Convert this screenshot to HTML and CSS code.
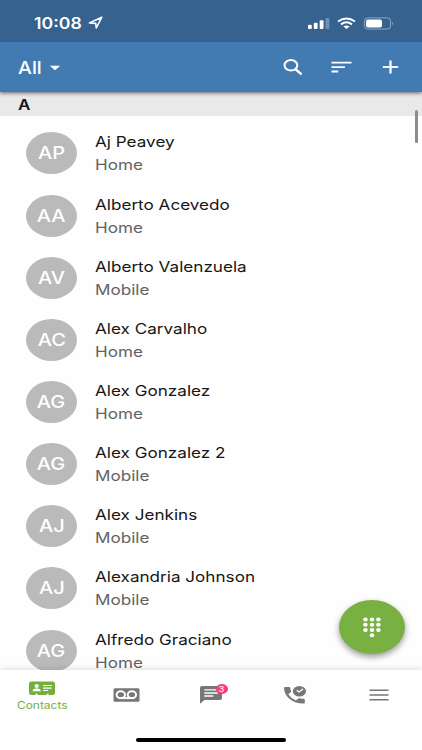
FILE: index.html
```html
<!DOCTYPE html>
<html lang="en">
<head>
<meta charset="utf-8">
<title>Contacts</title>
<link rel="stylesheet" href="styles.css">
</head>
<body>
<div class="app">
  <header class="status">
    <div class="clock"><span class="wide">10:08</span></div>
    <svg class="locate" width="16" height="14" viewBox="0 0 16 14"><path d="M1.4 6.9 13.8 1.2 8.3 12 7.7 7.4Z" fill="none" stroke="#fff" stroke-width="1.6" stroke-linejoin="round"/></svg>
    <svg class="signals" width="88" height="14" viewBox="0 0 88 14">
      <g fill="#fff"><rect x="1" y="7.7" width="3.8" height="4.3" rx="1"/><rect x="6.8" y="5.7" width="3.8" height="6.3" rx="1"/><rect x="12.7" y="3.2" width="3.8" height="8.8" rx="1"/><rect x="18.5" y="1" width="3.8" height="11" rx="1" opacity=".3"/></g>
      <g fill="none" stroke="#fff" stroke-width="2"><path d="M31 4.5Q39.5-1.5 48 4.5"/><path d="M34 7.4Q39.5 3.3 45 7.4"/></g>
      <path d="M36.4 9.6Q39.5 7.3 42.6 9.6L39.5 12Z" fill="#fff"/>
      <rect x="57.4" y=".9" width="26.2" height="11.2" rx="3.4" fill="none" stroke="#fff" stroke-opacity=".45"/>
      <rect x="59" y="2.6" width="16" height="7.8" rx="2" fill="#fff"/>
      <path d="M85 4.6Q86.8 6.5 85 8.4Z" fill="#fff" opacity=".5"/>
    </svg>
  </header>
  <nav class="toolbar">
    <div class="filter"><span class="wide">All</span></div>
    <svg class="caret" width="12" height="6" viewBox="0 0 12 6"><path d="M.8.8H11.2L6 5.2Z" fill="#fff"/></svg>
    <svg class="search" width="20" height="17" viewBox="0 0 20 17"><g fill="none" stroke="#fff" stroke-width="2"><ellipse cx="7.9" cy="6.3" rx="6.4" ry="5.2"/><path d="M12.2 10 18.6 15.4" stroke-width="2.4"/></g></svg>
    <svg class="sort" width="21" height="12" viewBox="0 0 21 12"><path d="M.5 1.6h20M.5 6.1h13.4M.5 10.5h6.7" stroke="#fff" stroke-width="1.9"/></svg>
    <svg class="plus" width="17" height="14" viewBox="0 0 17 14"><path d="M.8 7h15.4" stroke="#fff" stroke-width="1.9"/><path d="M8.5.5v13" stroke="#fff" stroke-width="2.2"/></svg>
  </nav>
  <main class="content">
    <h2 class="letter"><span class="wide">A</span></h2>
    <ul class="list">
      <li><div class="avatar"><span class="wide">AP</span></div><div class="info"><b class="wide">Aj Peavey</b><small class="wide">Home</small></div></li>
      <li><div class="avatar"><span class="wide">AA</span></div><div class="info"><b class="wide">Alberto Acevedo</b><small class="wide">Home</small></div></li>
      <li><div class="avatar"><span class="wide">AV</span></div><div class="info"><b class="wide">Alberto Valenzuela</b><small class="wide">Mobile</small></div></li>
      <li><div class="avatar"><span class="wide">AC</span></div><div class="info"><b class="wide">Alex Carvalho</b><small class="wide">Home</small></div></li>
      <li><div class="avatar"><span class="wide">AG</span></div><div class="info"><b class="wide">Alex Gonzalez</b><small class="wide">Home</small></div></li>
      <li><div class="avatar"><span class="wide">AG</span></div><div class="info"><b class="wide">Alex Gonzalez 2</b><small class="wide">Mobile</small></div></li>
      <li><div class="avatar"><span class="wide">AJ</span></div><div class="info"><b class="wide">Alex Jenkins</b><small class="wide">Mobile</small></div></li>
      <li><div class="avatar"><span class="wide">AJ</span></div><div class="info"><b class="wide">Alexandria Johnson</b><small class="wide">Mobile</small></div></li>
      <li><div class="avatar"><span class="wide">AG</span></div><div class="info"><b class="wide">Alfredo Graciano</b><small class="wide">Home</small></div></li>
    </ul>
    <div class="scrollbar"></div>
    <div class="fab">
      <svg width="20" height="21" viewBox="0 0 20 21"><g fill="#fff"><ellipse cx="3.4" cy="2.4" rx="2.3" ry="2"/><ellipse cx="10" cy="2.4" rx="2.3" ry="2"/><ellipse cx="16.4" cy="2.4" rx="2.3" ry="2"/><ellipse cx="3.4" cy="7.7" rx="2.3" ry="2"/><ellipse cx="10" cy="7.7" rx="2.3" ry="2"/><ellipse cx="16.4" cy="7.7" rx="2.3" ry="2"/><ellipse cx="3.4" cy="13" rx="2.3" ry="2"/><ellipse cx="10" cy="13" rx="2.3" ry="2"/><ellipse cx="16.4" cy="13" rx="2.3" ry="2"/><ellipse cx="10" cy="18.3" rx="2.3" ry="2"/></g></svg>
    </div>
  </main>
  <footer class="tabs">
    <div class="tab active">
      <svg width="28" height="15" viewBox="0 0 28 15"><path d="M3.5.6h21Q27 .6 27 2.8v9Q27 14 24.5 14h-3.8v-1.2h-2V14H9.5v-1.2h-2V14h-4Q1 14 1 11.8v-9Q1 .6 3.5.6Z" fill="#75ae3c"/><g fill="#fff"><ellipse cx="8.7" cy="5" rx="2.2" ry="2"/><path d="M4.5 10.3Q4.7 7.6 7.3 7.4h2.8q2.6.2 2.8 2.900Z"/></g><path d="M15 4.500h8.800M15 7.100h8.800M15 9.500h5.200" stroke="#fff" stroke-width="1.100"/></svg>
      <span class="wide">Contacts</span>
    </div>
    <div class="tab">
      <svg width="27" height="14" viewBox="0 0 27 14"><rect x=".5" y=".2" width="26" height="13.600" rx="1.500" fill="#777"/><g fill="none" stroke="#fff" stroke-width="2"><ellipse cx="7.800" cy="6.700" rx="4.200" ry="3.400"/><ellipse cx="18.900" cy="6.700" rx="4.200" ry="3.400"/><path d="M7.800 10.100h11.100"/></g></svg>
    </div>
    <div class="tab chat">
      <svg width="22" height="18" viewBox="0 0 22 18"><path d="M2 0h18q2 0 2 1.700v10.600q0 1.700-2 1.700H4.500L0 17.800V1.700Q0 0 2 0Z" fill="#777"/><path d="M4.300 3.900h13.400M4.300 7h13.400M4.300 10h9" stroke="#fff" stroke-width="1.400"/></svg>
      <i class="badge"><span class="wide">3</span></i>
    </div>
    <div class="tab">
      <svg width="22" height="18" viewBox="0 0 22 18"><path d="M1.100 1h4.100q1.100 0 1.100 1 .1 1.700.7 3.200.2.600-.3 1.100L4.300 8.200q2.600 4.200 7.700 6.300l2.400-2q.6-.4 1.300-.2 1.900.5 3.900.5 1.200.1 1.200.9v3q0 .9-1.200.9C8.900 17.600 0 10.300 0 1.900Q0 1 1.100 1Z" fill="#777"/><ellipse cx="15.400" cy="5.200" rx="6.600" ry="5.200" fill="#777"/><path d="M12.700 4.300 15 6l4-3" stroke="#fff" stroke-width="1.300" fill="none"/></svg>
    </div>
    <div class="tab menu">
      <svg width="20" height="12" viewBox="0 0 20 12"><path d="M.5 1.200h19M.5 6h19M.5 10.700h19" stroke="#777" stroke-width="1.500"/></svg>
    </div>
    <div class="homebar"></div>
  </footer>
</div>
</body>
</html>
```
FILE: styles.css
```css
* { box-sizing: border-box; }
body { margin: 0; font-family: Inter, "Liberation Sans", sans-serif; }
svg { display: block; flex: none; }
.app { width: 422px; height: 750px; display: flex; flex-direction: column; overflow: hidden; background: #fefefe; }
/* Glyphs are widened horizontally throughout the interface. */
.wide { display: block; width: max-content; white-space: nowrap; transform: scaleX(1.18); transform-origin: left center; }

.status { height: 42px; flex: none; display: flex; align-items: center; padding: 4px 25px 0 34px; background: #35628f; color: #fff; position: relative; z-index: 3; }
.clock { width: 54px; font-size: 15.500px; font-weight: 600; }
.clock .wide { transform: scaleX(1.14); }
.signals { margin-left: auto; position: relative; top: 1px; left: -2px; }

.toolbar { height: 50px; flex: none; display: flex; align-items: center; padding: 0 23px 0 18px; background: #427ab2; color: #fff; position: relative; z-index: 2; box-shadow: 0 1px 4px rgba(0,0,0,.6); }
.filter { width: 31px; font-size: 17.500px; font-weight: 500; }
.filter .wide { transform: scaleX(1.12); }
.caret { margin-top: 2px; }
.search { margin-left: auto; margin-right: 28px; }
.sort { margin-right: 30px; }

.content { flex: 1; min-height: 0; position: relative; overflow: hidden; }
.letter { margin: 0; height: 24px; padding-left: 18px; background: #e9e9e9; color: #151515; font-size: 14.500px; line-height: 26px; font-weight: 600; }
.list { list-style: none; margin: 0; padding: 6.400px 0 0 26px; }
.list li { height: 62.150px; display: flex; align-items: center; gap: 17.500px; }
.avatar { width: 51px; height: 42px; border-radius: 50%; background: #bababa; color: #fff; display: flex; align-items: center; justify-content: center; font-size: 17px; font-weight: 500; }
.avatar .wide { transform-origin: center; }
.info b, .info small { font-size: 14.500px; line-height: 23px; font-weight: 400; }
.info b { color: #171717; }
.info small { color: #636363; }
.scrollbar { position: absolute; right: 4px; top: 18px; width: 3px; height: 33px; border-radius: 2px; background: #8c8c8c; }
.fab { position: absolute; left: 339px; top: 508px; width: 66px; height: 54px; border-radius: 50%; background: #78b042; display: flex; align-items: center; justify-content: center; box-shadow: 0 3px 6px rgba(0,0,0,.4); }

.tabs { height: 80px; flex: none; display: grid; grid-template-columns: repeat(5, 84.300px); background: #fefefe; position: relative; box-shadow: 0 -1px 6px rgba(0,0,0,.14); }
.tab { height: 50px; display: flex; flex-direction: column; align-items: center; justify-content: center; }
.active { justify-content: flex-start; padding-top: 11px; color: #75ae3c; font-size: 10.500px; line-height: 15px; }
.active .wide { transform: scaleX(1.14); transform-origin: center; margin-top: 2px; }
.chat { position: relative; }
.badge { position: absolute; left: 47px; top: 14px; width: 12px; height: 10px; border-radius: 50%; background: #f83e7d; color: #fff; font-size: 8px; line-height: 10px; font-style: normal; display: flex; justify-content: center; }
.badge .wide { transform-origin: center; }
.homebar { position: absolute; left: 136px; top: 68px; width: 150px; height: 4px; border-radius: 2px; background: #000; }
```
